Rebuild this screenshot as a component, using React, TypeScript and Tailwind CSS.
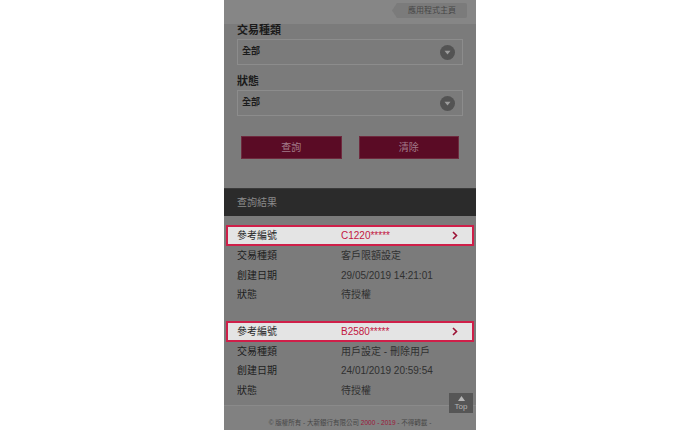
const font = { fontFamily: '"Liberation Sans", "Noto Sans CJK TC", sans-serif' };

type Record = {
  ref: string;
  type: string;
  created: string;
  status: string;
};

const records: Record[] = [
  { ref: "C1220*****", type: "客戶限額設定", created: "29/05/2019 14:21:01", status: "待授權" },
  { ref: "B2580*****", type: "用戶設定 - 刪除用戶", created: "24/01/2019 20:59:54", status: "待授權" },
];

function SelectBox() {
  return (
    <div className="mt-[3px] flex h-[26px] items-center justify-between border border-[#8c8c8c] pl-[4px] pr-[7px]">
      <span className="text-[9px] font-bold text-[#1c1c1c]">全部</span>
      <span className="flex size-[15px] items-center justify-center rounded-full bg-[#535353]">
        <svg width="7" height="5" viewBox="0 0 7 5">
          <path d="M0.5 0.8 L6.5 0.8 L3.5 4.4 Z" fill="#9c9c9c" />
        </svg>
      </span>
    </div>
  );
}

function ResultCard({ r, last }: { r: Record; last?: boolean }) {
  return (
    <div className={last ? "" : "mb-[16px]"}>
      <div className="mx-[2px] flex h-[21px] items-center border-2 border-[#cf1f49] bg-[#e4e4e4] pl-[9px] pr-[14px] text-[10px]">
        <span className="w-[104px] text-[#262626]">參考編號</span>
        <span className="flex-1 text-[#c2163f]">{r.ref}</span>
        <svg width="6" height="9" viewBox="0 0 6 9">
          <path d="M1 1 L4.5 4.5 L1 8" fill="none" stroke="#9c1235" strokeWidth="1.6" />
        </svg>
      </div>
      {[
        ["交易種類", r.type],
        ["創建日期", r.created],
        ["狀態", r.status],
      ].map(([k, v]) => (
        <div key={k} className="flex h-[19.5px] items-center pl-[13px] text-[10px]">
          <span className="w-[104px] text-[#1e1e1e]">{k}</span>
          <span className="text-[#303030]">{v}</span>
        </div>
      ))}
    </div>
  );
}

export default function App() {
  return (
    <div className="min-h-[430px] bg-white" style={font}>
      <div className="relative mx-auto h-[430px] w-[252px] overflow-hidden bg-[#7b7b7b]">
        {/* header */}
        <div className="flex h-[24px] justify-end bg-[#868686] pr-[9px] pt-[3px]">
          <div className="flex h-[15px]">
            <svg width="5" height="15" viewBox="0 0 5 15">
              <path d="M5 0 L0 7.5 L5 15 Z" fill="#7b7b7b" />
            </svg>
            <div className="flex w-[70px] items-center justify-center rounded-r-[2px] bg-[#7b7b7b] text-[8px] text-[#474747]">
              應用程式主頁
            </div>
          </div>
        </div>

        {/* filters */}
        <div className="px-[13px]">
          <div className="text-[11px] leading-[12px] font-bold text-[#1a1a1a]">交易種類</div>
          <SelectBox />
          <div className="mt-[10px] text-[11px] leading-[12px] font-bold text-[#1a1a1a]">狀態</div>
          <SelectBox />
          <div className="mt-[20px] flex gap-[17px] px-[4px]">
            <button className="h-[23px] w-[101px] border border-[#6e2a3e] bg-[#5a0b25] text-[10px] text-[#a27b89]">查詢</button>
            <button className="h-[23px] w-[101px] border border-[#6e2a3e] bg-[#5a0b25] text-[10px] text-[#a27b89]">清除</button>
          </div>
        </div>

        {/* results header */}
        <div className="mt-[29px] flex h-[28px] items-center border-t border-[#3a3a3a] bg-[#2b2b2b] px-[13px] text-[10px] text-[#8a8a8a]">
          查詢結果
        </div>

        {/* results */}
        <div className="pt-[9px]">
          {records.map((r, i) => (
            <ResultCard key={r.ref} r={r} last={i === records.length - 1} />
          ))}
        </div>

        {/* footer */}
        <div className="mt-[5px] flex h-[26px] items-end justify-center border-t border-[#8a8a8a] bg-[#818181] pb-[3px] text-[6.5px] text-[#474747]">
          © 版權所有 - 大新銀行有限公司&nbsp;<span className="text-[#9a1638]">2000 - 2019</span>&nbsp;- 不得轉載 -
        </div>

        {/* back to top */}
        <div className="absolute bottom-[17px] right-[3px] flex h-[20px] w-[24px] flex-col items-center justify-center bg-[#565656] text-[8px] leading-[9px] text-[#b4b4b4]">
          <svg width="7" height="5" viewBox="0 0 7 5">
            <path d="M0 5 L3.5 0 L7 5 Z" fill="#b4b4b4" />
          </svg>
          <span className="mt-[1px]">Top</span>
        </div>
      </div>
    </div>
  );
}
